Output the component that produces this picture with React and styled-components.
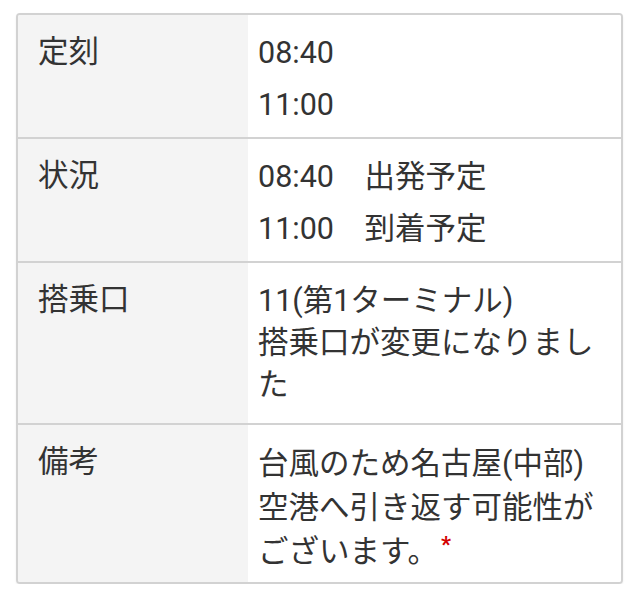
import React from "react";
import styled, { createGlobalStyle } from "styled-components";

const Global = createGlobalStyle`
  html, body { margin: 0; padding: 0; background: #fff; }
  body { font-family: Roboto, "Noto Sans CJK JP", sans-serif; color: #333; }
`;

const Page = styled.div`
  padding: 13px 17px 0 16px;
`;

const Table = styled.div`
  border: 2px solid #d2d2d2;
  border-radius: 4px;
  box-shadow: 0 1px 2px rgba(0, 0, 0, 0.08);
  overflow: hidden;
`;

const Row = styled.div`
  display: grid;
  grid-template-columns: 230px 1fr;
  border-top: ${(p) => (p.$first ? "none" : "2px solid #d2d2d2")};
`;

const Label = styled.div`
  background: #f4f4f4;
  padding: 16px 10px 12px 20px;
  font-size: 30.5px;
  line-height: 42px;
  color: #333;
`;

const variants = {
  tight: { padding: "12px 20px 6px 10px", lh: "52px" },
  normal: { padding: "17px 20px 17px 10px", lh: "42px" },
  loose: { padding: "17px 20px 8px 10px", lh: "44px" },
};

const Value = styled.div`
  background: #fff;
  padding: ${(p) => variants[p.$variant || "normal"].padding};
  font-size: 30.5px;
  line-height: ${(p) => variants[p.$variant || "normal"].lh};
  color: #333;
`;

const Line = styled.div``;

const Star = styled.span`
  position: relative;
  top: -10px;
  color: #d40000;
  font-size: 22px;
  line-height: 0;
  font-weight: 700;
  margin-left: 3px;
`;

export default function App() {
  return (
    <>
      <Global />
      <Page>
        <Table>
          <Row $first>
            <Label>定刻</Label>
            <Value $variant="tight">
              <Line>08:40</Line>
              <Line>11:00</Line>
            </Value>
          </Row>
          <Row>
            <Label>状況</Label>
            <Value $variant="tight">
              <Line>08:40　出発予定</Line>
              <Line>11:00　到着予定</Line>
            </Value>
          </Row>
          <Row>
            <Label>搭乗口</Label>
            <Value>
              <Line>11(第1ターミナル)</Line>
              <Line>搭乗口が変更になりまし</Line>
              <Line>た</Line>
            </Value>
          </Row>
          <Row>
            <Label>備考</Label>
            <Value $variant="loose">
              <Line>台風のため名古屋(中部)</Line>
              <Line>空港へ引き返す可能性が</Line>
              <Line>
                ございます。<Star>*</Star>
              </Line>
            </Value>
          </Row>
        </Table>
      </Page>
    </>
  );
}
